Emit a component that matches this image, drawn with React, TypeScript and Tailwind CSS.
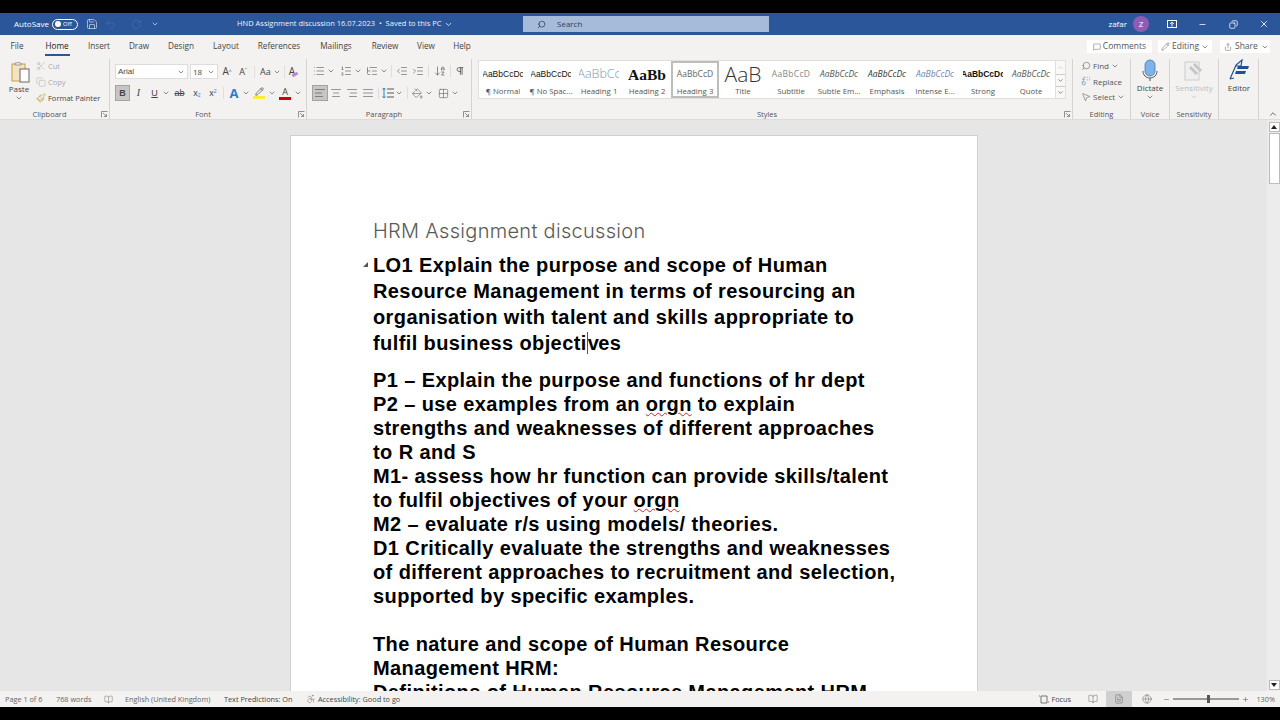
import React from "react";
import {
  Save, Undo2, RotateCw, ChevronDown, ChevronUp, Search, X, Minus, Copy, Scissors, Paintbrush, MessageSquare, Pencil, Share, List, ListOrdered, ListTree, IndentDecrease, IndentIncrease, ArrowDownAZ, Pilcrow, AlignLeft, AlignCenter, AlignRight, AlignJustify, PaintBucket, Grid2x2, Replace, MousePointer2, Plus, BookOpen, FileText, Globe, Accessibility
} from "lucide-react";

const s = { fontFamily: '"Liberation Sans", Arial, sans-serif' };
const UI = "font-['Open_Sans',sans-serif]";

function Corner() {
  return (
    <svg width="7" height="7" viewBox="0 0 7 7" className="shrink-0">
      <path d="M.5 6.5v-6h6M2 2l3.5 3.500M5.500 3v2.500H3" fill="none" stroke="#777" strokeWidth=".8" />
    </svg>
  );
}

function Caret({ c = "#555" }: { c?: string }) {
  return <ChevronDown size={8} strokeWidth={2} color={c} className="shrink-0" />;
}

function GroupLabel({ label, corner }: { label: string; corner?: boolean }) {
  return (
    <div className={"absolute left-0 right-0 -bottom-[2px] h-[13px] flex items-center justify-center text-[7.5px] text-[#555] " + (corner ? "pr-[10px]" : "")}>
      {label}
      {corner && (
        <span className="absolute right-[1px] top-[3px]">
          <Corner />
        </span>
      )}
    </div>
  );
}

function Group({ w, label, corner, children }: { w: number; label: string; corner?: boolean; children: React.ReactNode }) {
  return (
    <div style={{ width: w }} className="relative h-[60px] mt-[2px] shrink-0 border-r border-[#d5d3d1]">
      <div className="-mt-[2px]">{children}</div>
      <GroupLabel label={label} corner={corner} />
    </div>
  );
}

function Ic({ children, w = 16, active }: { children: React.ReactNode; w?: number; active?: boolean }) {
  return (
    <div style={{ width: w }} className={"h-[16px] flex items-center justify-center shrink-0 " + (active ? "bg-[#c8c6c4] border border-[#a3a3a3]" : "")}>
      {children}
    </div>
  );
}

function Sep({ cls }: { cls: string }) {
  return <div className={"w-px h-[12px] bg-[#dddddd] shrink-0 " + cls} />;
}

const styles: [string, string, string][] = [
  ["AaBbCcDc", "¶ Normal", "text-[8.500px] text-[#111] font-['Liberation_Sans']"],
  ["AaBbCcDc", "¶ No Spac...", "text-[8.500px] text-[#111] font-['Liberation_Sans']"],
  ["AaBbCc", "Heading 1", "text-[12.500px] text-[#8496b0] font-['Open_Sans'] font-light"],
  ["AaBb", "Heading 2", "text-[15.500px] font-bold text-[#111] font-['Liberation_Serif']"],
  ["AaBbCcD", "Heading 3", "text-[8.500px] text-[#666] font-['Open_Sans']"],
  ["AaB", "Title", "text-[21px] text-[#333] font-['Open_Sans'] font-light"],
  ["AaBbCcD", "Subtitle", "text-[8.500px] text-[#888] font-['Open_Sans'] tracking-[0.3px]"],
  ["AaBbCcDc", "Subtle Em...", "text-[8.500px] italic text-[#555] font-['Open_Sans']"],
  ["AaBbCcDc", "Emphasis", "text-[8.500px] italic text-[#333] font-['Open_Sans']"],
  ["AaBbCcDc", "Intense E...", "text-[8.500px] italic text-[#6a86b0] font-['Open_Sans']"],
  ["AaBbCcDc", "Strong", "text-[8.500px] font-bold text-[#111] font-['Liberation_Sans']"],
  ["AaBbCcDc", "Quote", "text-[8.500px] italic text-[#555] font-['Open_Sans']"],
];

const tabs = ["File", "Home", "Insert", "Draw", "Design", "Layout", "References", "Mailings", "Review", "View", "Help"];
const tabW = ["w-[34px]", "w-[46px]", "w-[38px]", "w-[42px]", "w-[42px]", "w-[48px]", "w-[58px]", "w-[56px]", "w-[42px]", "w-[40px]", "w-[32px]"];

export default function App() {
  return (
    <div className={"w-[1280px] h-[720px] bg-black flex flex-col overflow-hidden " + UI}>
      <div className="h-[13px] shrink-0 bg-black" />

      {/* title bar */}
      <div className="h-[22px] shrink-0 bg-[#2b579a] text-white flex items-center text-[8px]">
        <span className="ml-[14px] text-[8px] w-[37px]">AutoSave</span>
        <div className="ml-[1px] w-[26px] h-[11px] rounded-full border border-white flex items-center px-[2px] gap-[2px]">
          <div className="w-[6px] h-[6px] rounded-full bg-white" />
          <span className="text-[6px] leading-none">Off</span>
        </div>
        <Save size={12} strokeWidth={1.3} className="ml-[8px] text-[#dfe7f3]" />
        <Undo2 size={11} strokeWidth={1.3} className="ml-[7px] text-[#4a72ad]" />
        <RotateCw size={11} strokeWidth={1.3} className="ml-[15px] text-[#4a72ad]" />
        <ChevronDown size={8} className="ml-[9px] text-[#dfe7f3]" />
        <span className="ml-[78px] w-[207px] whitespace-nowrap text-[7.500px] text-[#eef2f8]">HND Assignment discussion 16.07.2023 &nbsp;•&nbsp; Saved to this PC</span>
        <ChevronDown size={9} />
        <div className="ml-[70px] w-[246px] h-[16px] bg-[#a5bbd9] flex items-center text-[#2c3e5a] text-[8px]">
          <Search size={9} className="ml-[14px] text-[#2c3e5a] -scale-x-100" />
          <span className="ml-[11px]">Search</span>
        </div>
        <div className="flex-1" />
        <span className="text-[8px] mr-[6px]">zafar</span>
        <div className="w-[16px] h-[16px] rounded-full bg-[#8e5cb5] flex items-center justify-center text-[8px] mr-[18px]">Z</div>
        <svg width="10" height="8" viewBox="0 0 10 8" className="mr-[21px]">
          <rect x=".5" y=".5" width="9" height="7" fill="#2b579a" stroke="#fff" />
          <path d="M5 6.500V2.500M3.200 4L5 2.200 6.800 4" stroke="#fff" fill="none" />
        </svg>
        <Minus size={9} className="mr-[22px]" />
        <Copy size={9} className="mr-[21px] -scale-x-100" />
        <X size={10} className="mr-[11px]" />
      </div>

      {/* tabs */}
      <div className="h-[22px] shrink-0 bg-[#f3f2f1] flex items-center text-[8.200px] text-[#444] pt-[1px]">
        <div className="flex w-[480px]">
          {tabs.map((t, i) => (
            <div key={t} className={tabW[i] + " shrink-0 text-center relative " + (t === "Home" ? "text-[#222]" : "")}>
              {t}
              {t === "Home" && <div className="absolute left-[11px] right-[10px] -bottom-[3px] h-[2px] bg-[#2b579a]" />}
            </div>
          ))}
        </div>
        <div className="flex-1" />
        <div className="w-[65px] h-[13px] bg-white flex items-center justify-center gap-[2px] mr-[6px]">
          <MessageSquare size={8} strokeWidth={1.3} />
          <span className="text-[8.500px] text-[#555]">Comments</span>
        </div>
        <div className="w-[54px] h-[13px] bg-white flex items-center justify-center gap-[2px] mr-[8px]">
          <Pencil size={9} strokeWidth={1.2} />
          <span className="text-[8.500px] text-[#555]">Editing</span>
          <Caret />
        </div>
        <div className="w-[50px] h-[13px] bg-white flex items-center gap-[3px] pl-[4px] mr-[10px]">
          <Share size={8} strokeWidth={1.3} />
          <span className="text-[8.500px] text-[#555]">Share</span>
          <Caret />
        </div>
      </div>

      {/* ribbon */}
      <div className="h-[63px] shrink-0 bg-[#f3f2f1] flex text-[8px] text-[#666] border-b border-[#dcdcdc]">
        <Group w={110} label="Clipboard" corner>
          <div className="flex">
            <div className="w-[34px] flex flex-col items-center pt-[4px] ml-[2px]">
              <svg width="22" height="22" viewBox="0 0 22 22">
                <rect x="4" y="3" width="13" height="17" fill="#f4e3bf" stroke="#c89c4e" />
                <path d="M7 4V2h2l1-1 1 1h2v2z" fill="#eee" stroke="#888" strokeWidth=".8" />
                <rect x="12" y="8" width="9" height="13" fill="#fff" stroke="#666" />
              </svg>
              <span className="text-[8px] text-[#444] mt-[1px] leading-[10px]">Paste</span>
              <Caret />
            </div>
            <div className="flex flex-col pt-[1px] text-[7.500px] leading-[16px]">
              <div className="flex items-center gap-[2px] text-[#aaaaaa] h-[16px]"><Scissors size={10} strokeWidth={1.2} /> Cut</div>
              <div className="flex items-center gap-[2px] text-[#aaaaaa] h-[16px]"><Copy size={10} strokeWidth={1.2} /> Copy</div>
              <div className="flex items-center gap-[2px] text-[#444] h-[16px]"><Paintbrush size={10} strokeWidth={1.3} color="#b8860b" /> Format Painter</div>
            </div>
          </div>
        </Group>

        <Group w={197} label="Font" corner>
          <div className="flex items-center pt-[7px] pl-[5px] gap-[2px]">
            <div className="w-[73px] h-[15px] bg-white border border-[#dddddd] flex items-center justify-between px-[2px] text-[#444]">
              <span className="text-[8px] font-['Liberation_Sans']">Arial</span><Caret />
            </div>
            <div className="w-[28px] h-[15px] bg-white border border-[#dddddd] flex items-center justify-between px-[2px] text-[#444]">
              <span className="text-[8px]">18</span><Caret />
            </div>
            <span className="text-[10px] text-[#444] w-[12px] text-center ml-[1px]">A<sup className="text-[5px]">^</sup></span>
            <span className="text-[9px] text-[#444] w-[16px] text-center">A<sup className="text-[5px]">ˇ</sup></span>
            <Sep cls="mx-[1px]" />
            <span className="text-[9px] text-[#444] ml-[2px]">Aa</span><Caret />
            <Sep cls="ml-[1px] mr-[2px]" />
            <span className="text-[10px] text-[#444] relative">A<span className="absolute -right-[3px] bottom-[3px] w-[6px] h-[3px] bg-[#b78ad0] rotate-[-30deg]" /></span>
          </div>
          <div className="flex items-center pl-[5px] mt-[6px] text-[#444]">
            <Ic active w={15}><span className="text-[9px] font-bold font-['Liberation_Sans'] leading-none">B</span></Ic>
            <Ic w={17}><span className="text-[10px] italic font-['Liberation_Serif'] leading-none">I</span></Ic>
            <Ic w={15}><span className="text-[9px] underline font-['Liberation_Sans'] leading-none">U</span></Ic><Caret />
            <Ic w={19}><span className="text-[9px] line-through font-['Liberation_Sans'] leading-none">ab</span></Ic>
            <Ic w={16}><span className="text-[9px] font-['Liberation_Sans'] leading-none">x<sub className="text-[5px] text-[#2b7cd3]">2</sub></span></Ic>
            <Ic w={16}><span className="text-[9px] font-['Liberation_Sans'] leading-none">x<sup className="text-[5px] text-[#2b7cd3]">2</sup></span></Ic>
            <Sep cls="mx-[2px]" />
            <Ic w={16}><span className="text-[13px] font-bold text-[#2b7cd3] leading-none">A</span></Ic><Caret />
            <Ic w={18}>
              <div className="flex flex-col items-center">
                <Pencil size={9} color="#555" />
                <div className="w-[12px] h-[3px] bg-[#ffeb3b]" />
              </div>
            </Ic><Caret />
            <Ic w={18}>
              <div className="flex flex-col items-center">
                <span className="text-[9px] leading-[9px] text-[#444]">A</span>
                <div className="w-[12px] h-[3px] bg-[#d00000] mt-[1px]" />
              </div>
            </Ic><Caret />
          </div>
        </Group>

        <Group w={165} label="Paragraph" corner>
          <div className="flex items-center pt-[6px] pl-[4px] text-[#555] h-[22px]">
            <Ic w={16}><List size={12} strokeWidth={1.2} /></Ic><Caret />
            <div className="ml-[3px]"><Ic w={16}><ListOrdered size={12} strokeWidth={1.2} /></Ic></div><Caret />
            <div className="ml-[2px]"><Ic w={16}><ListTree size={12} strokeWidth={1.2} /></Ic></div><Caret />
            <Sep cls="ml-[3px] mr-[2px]" />
            <Ic w={16}><IndentDecrease size={12} strokeWidth={1.2} /></Ic>
            <Ic w={16}><IndentIncrease size={12} strokeWidth={1.2} /></Ic>
            <Sep cls="mx-[2px]" />
            <Ic w={18}><ArrowDownAZ size={12} strokeWidth={1.3} /></Ic>
            <Sep cls="mx-[1px]" />
            <Ic w={16}><Pilcrow size={10} strokeWidth={2} /></Ic>
          </div>
          <div className="flex items-center mt-[6px] pl-[5px] text-[#555]">
            <Ic active w={16}><AlignLeft size={12} strokeWidth={1.3} /></Ic>
            <Ic w={16}><AlignCenter size={12} strokeWidth={1.2} /></Ic>
            <Ic w={16}><AlignRight size={12} strokeWidth={1.2} /></Ic>
            <Ic w={16}><AlignJustify size={12} strokeWidth={1.2} /></Ic>
            <Sep cls="mx-[2px]" />
            <Ic w={14}>
              <svg width="12" height="12" viewBox="0 0 12 12" fill="none">
                <path d="M5 2h7M5 6h7M5 10h7" stroke="#555" />
                <path d="M2 1v10M.500 2.500L2 1l1.500 1.500M.500 9.500L2 11l1.500-1.500" stroke="#2b7cd3" />
              </svg>
            </Ic><Caret />
            <Sep cls="ml-[4px] mr-[2px]" />
            <Ic w={14}><PaintBucket size={11} strokeWidth={1.2} /></Ic>
            <div className="ml-[1px]"><Caret /></div>
            <div className="ml-[2px]"><Ic w={16}><Grid2x2 size={11} strokeWidth={1.2} /></Ic></div><Caret />
          </div>
        </Group>

        <Group w={601} label="Styles" corner>
          <div className="ml-[6px] mt-[3px] w-[588px] h-[39px] flex bg-white border border-[#e1dfdd]">
            <div className="flex flex-1">
              {styles.map(([a, b, c]) => (
                <div key={b} className={"w-[48px] shrink-0 flex flex-col items-center overflow-hidden pt-[1px] " + (b === "Heading 3" ? "border-2 border-[#bdbdbd]" : "border-2 border-transparent")}>
                  <div className={"h-[22px] flex items-center whitespace-nowrap overflow-hidden w-[40px] justify-center leading-none " + c}>{a}</div>
                  <div className="text-[7.800px] leading-[10px] mt-[1px] text-[#555] whitespace-nowrap">{b}</div>
                </div>
              ))}
            </div>
            <div className="w-[10px] border-l border-[#e1dfdd] flex flex-col bg-[#f8f8f8]">
              <div className="h-[13px] flex items-center justify-center"><ChevronUp size={7} color="#bbbbbb" /></div>
              <div className="h-[13px] flex items-center justify-center border-y border-[#cccccc]"><ChevronDown size={7} color="#444" /></div>
              <div className="h-[11px] flex items-center justify-center"><ChevronDown size={7} color="#444" /></div>
            </div>
          </div>
        </Group>

        <Group w={58} label="Editing">
          <div className="flex flex-col pl-[8px] pt-[1px] text-[#555] text-[8px] leading-[15px]">
            <div className="flex items-center gap-[2px] h-[15px]"><Search size={10} className="-scale-x-100" strokeWidth={1.3} /> Find <Caret /></div>
            <div className="flex items-center gap-[2px] h-[16px]"><Replace size={10} color="#3f7fc2" strokeWidth={1.3} /> Replace</div>
            <div className="flex items-center gap-[2px] h-[15px]"><MousePointer2 size={10} strokeWidth={1.3} /> Select <Caret /></div>
          </div>
        </Group>

        <Group w={39} label="Voice">
          <div className="flex flex-col items-center pt-[2px]">
            <svg width="20" height="22" viewBox="0 0 20 22">
              <rect x="5" y="1" width="10" height="16" rx="5" fill="#7fb2e5" stroke="#3a78bd" strokeWidth=".8" />
              <path d="M3 12c0 4 3 7 7 7s7-3 7-7" fill="none" stroke="#555" strokeWidth="1" />
              <path d="M10 19v3" stroke="#555" />
            </svg>
            <span className="text-[8px] text-[#444] leading-[11px] mt-[1px]">Dictate</span>
            <Caret />
          </div>
        </Group>

        <Group w={49} label="Sensitivity">
          <div className="flex flex-col items-center pt-[2px] text-[#bbbbbb]">
            <svg width="20" height="22" viewBox="0 0 20 22">
              <rect x="1" y="3" width="14" height="18" fill="#efefef" stroke="#cccccc" />
              <path d="M6 8l7 7M10 5l7 7" stroke="#c6c6c6" strokeWidth="3" />
            </svg>
            <span className="text-[8px] leading-[11px] mt-[1px]">Sensitivity</span>
            <Caret c="#bbbbbb" />
          </div>
        </Group>

        <Group w={40} label="">
          <div className="flex flex-col items-center pt-[2px] pl-[1px]">
            <svg width="22" height="22" viewBox="0 0 22 22">
              <path d="M2 20L8 6l6-5-1 6H8" fill="none" stroke="#1f4e9a" strokeWidth="1.2" />
              <path d="M10 7h11l-1 3H9zM8 12h10l-1 3H7z" fill="#1f4e9a" />
              <path d="M2 20l4-1" stroke="#1f4e9a" />
            </svg>
            <span className="text-[8px] text-[#444] leading-[11px] mt-[1px]">Editor</span>
          </div>
        </Group>
        <div className="flex-1 flex items-end justify-end pr-[2px]">
          <ChevronUp size={10} className="text-[#555]" />
        </div>
      </div>

      {/* document area */}
      <div className="h-[571px] shrink-0 flex bg-[#e6e6e6]">
        <div className="flex-1 flex justify-center overflow-hidden pt-[15px]">
          <div className="w-[688px] h-[700px] shrink-0 bg-white border border-[#d0d0d0] pl-[82px] pt-[77px] ml-[1px]">
            <div className="h-[36px] text-[20px] leading-[36px] text-[#595959] font-['Inter'] font-light whitespace-nowrap tracking-[0.3px]">HRM Assignment discussion</div>
            <div style={s} className="text-[20px] font-bold text-black tracking-[0.4px] w-[540px] relative pt-[3px]">
              <span className="absolute -left-[10px] top-[13px] w-0 h-0 border-b-[5px] border-l-[5px] border-b-[#555] border-l-transparent" />
              <div className="leading-[26px]">LO1 Explain the purpose and scope of Human<br />Resource Management in terms of resourcing an<br />organisation with talent and skills appropriate to<br />fulfil business objecti<span className="border-l border-[#555] -mr-px">v</span>es</div>
              <div className="leading-[24px] mt-[12px]">
                P1 – Explain the purpose and functions of hr dept<br />
                P2 – use examples from an <span className="underline decoration-wavy decoration-[#e02020] decoration-1">orgn</span> to explain<br />
                strengths and weaknesses of different approaches<br />
                to R and S<br />
                M1- assess how hr function can provide skills/talent<br />
                to fulfil objectives of your <span className="underline decoration-wavy decoration-[#e02020] decoration-1">orgn</span><br />
                M2 – evaluate r/s using models/ theories.<br />
                D1 Critically evaluate the strengths and weaknesses<br />
                of different approaches to recruitment and selection,<br />
                supported by specific examples.
              </div>
              <div className="leading-[24px] mt-[24px] whitespace-nowrap">
                The nature and scope of Human Resource<br />
                Management HRM:<br />
                Definitions of Human Resource Management HRM
              </div>
            </div>
          </div>
        </div>
        <div className="w-[13px] shrink-0 bg-[#ececec] flex flex-col items-center pl-[1px] pt-[2px] pb-[1px]">
          <div className="h-[10px] w-[11px] flex items-center justify-center bg-white border border-[#bbbbbb]">
            <svg width="6" height="4" viewBox="0 0 6 4"><path d="M3 0l3 4H0z" fill="#222" /></svg>
          </div>
          <div className="mt-[1px] w-[11px] h-[51px] bg-white border border-[#bbbbbb]" />
          <div className="flex-1" />
          <div className="h-[10px] w-[11px] flex items-center justify-center bg-white border border-[#bbbbbb]">
            <svg width="6" height="4" viewBox="0 0 6 4"><path d="M3 4l3-4H0z" fill="#222" /></svg>
          </div>
        </div>
      </div>

      {/* status bar */}
      <div className="h-[16px] shrink-0 bg-[#f3f2f1] flex items-center text-[7.300px] text-[#666]">
        <span className="ml-[5px] w-[51px]">Page 1 of 6</span>
        <span className="w-[48px] whitespace-nowrap">768 words</span>
        <BookOpen size={9} strokeWidth={1.2} />
        <span className="ml-[12px] w-[99px] whitespace-nowrap">English (United Kingdom)</span>
        <span className="w-[82px] text-[#444] whitespace-nowrap">Text Predictions: On</span>
        <Accessibility size={10} strokeWidth={1.2} />
        <span className="ml-[2px] text-[#444] whitespace-nowrap">Accessibility: Good to go</span>
        <div className="flex-1" />
        <svg width="10" height="10" viewBox="0 0 10 10" fill="none" stroke="#555" strokeWidth=".8">
          <path d="M2 2h6v7H2zM0 1v2M10 7v2" />
        </svg>
        <span className="ml-[2px] w-[37px] text-[#444]">Focus</span>
        <BookOpen size={10} strokeWidth={1.2} />
        <div className="ml-[8px] w-[26px] h-full bg-[#d0d0d0] flex items-center justify-center"><FileText size={10} strokeWidth={1.2} /></div>
        <Globe size={10} strokeWidth={1.2} className="ml-[10px]" />
        <Minus size={7} className="ml-[11px]" />
        <div className="ml-[3px] w-[66px] h-[2px] bg-[#999999] relative">
          <div className="absolute left-[34px] -top-[3px] w-[3px] h-[8px] bg-[#555]" />
        </div>
        <Plus size={7} className="ml-[3px]" />
        <span className="ml-[7px] mr-[5px]">130%</span>
      </div>
      <div className="flex-1 bg-black" />
    </div>
  );
}
